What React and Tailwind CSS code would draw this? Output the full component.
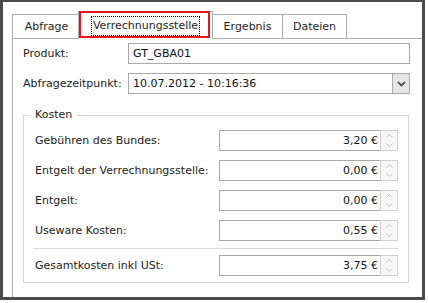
import React from "react";

const Tab = ({ label, className }) => (
    <div className={`h-[24px] bg-white border border-b-0 border-[#adadad] flex items-center justify-center text-[#1e1e1e] ${className}`}>
        {label}
    </div>
);

const Spin = () => (
    <div className="w-[18px] h-full -ml-px border border-[#d0d0d0] bg-[#f7f7f7] flex flex-col">
        <div className="flex-1 flex items-center justify-center">
            <svg width="7" height="4" viewBox="0 0 7 4">
                <path d="M0.5 3.5L3.5 0.5L6.5 3.5" stroke="#c2c2c2" strokeWidth="1" fill="none" />
            </svg>
        </div>
        <div className="flex-1 flex items-center justify-center">
            <svg width="7" height="4" viewBox="0 0 7 4">
                <path d="M0.5 0.5L3.5 3.5L6.5 0.5" stroke="#c2c2c2" strokeWidth="1" fill="none" />
            </svg>
        </div>
    </div>
);

const MoneyRow = ({ label, value, className = "" }) => (
    <div className={`flex items-center h-[21px] ${className}`}>
        <div className="w-[184px] text-[#222]">{label}</div>
        <div className="flex w-[179px] h-full">
            <div className="flex-1 h-full border border-[#a9a9a9] bg-white flex items-center justify-end pr-[2px] text-[#111]">
                {value}
            </div>
            <Spin />
        </div>
    </div>
);

export default function App() {
    return (
        <div className="w-[428px] h-[303px] bg-white font-['DejaVu_Sans',sans-serif] text-[11px] leading-[14px]">
            <div className="relative w-[425px] h-[300px] overflow-hidden bg-white border-l-[3px] border-t-2 border-r-[3px] border-b-[3px] border-[#4b4b4b]">
                {/* tab strip */}
                <div className="flex items-end h-[27px] mt-[9px] pl-[9px]">
                    <Tab label="Abfrage" className="w-[69px]" />
                    <div className="relative z-10 -ml-[3px] -mb-px w-[135px] h-[28px] bg-white border border-b-0 border-[#adadad] flex items-center justify-center">
                        <span className="px-px py-[2px] border border-dotted border-black text-[#1e1e1e]">Verrechnungsstelle</span>
                    </div>
                    <Tab label="Ergebnis" className="-ml-px w-[71px]" />
                    <Tab label="Dateien" className="-ml-px w-[65px]" />
                </div>

                {/* pane */}
                <div className="ml-[9px] w-[420px] h-[270px] border border-[#adadad] px-[10px] pt-[4px]">
                    <div className="flex items-center h-[21px]">
                        <div className="w-[105px] text-[#222]">Produkt:</div>
                        <div className="w-[282px] h-full border border-[#a9a9a9] pl-[4px] flex items-center text-[#111]">GT_GBA01</div>
                    </div>
                    <div className="flex items-center h-[21px] mt-[9px]">
                        <div className="w-[105px] text-[#222]">Abfragezeitpunkt:</div>
                        <div className="w-[282px] h-full border border-[#a9a9a9] flex items-center text-[#111]">
                            <div className="flex-1 pl-[4px]">10.07.2012 - 10:16:36</div>
                            <div className="w-[17px] h-full border-l border-[#acacac] bg-[#e6e6e6] flex items-center justify-center">
                                <svg width="9" height="6" viewBox="0 0 9 6">
                                    <path d="M1 1l3.5 3.5L8 1" stroke="#555" strokeWidth="1.8" fill="none" />
                                </svg>
                            </div>
                        </div>
                    </div>

                    <fieldset className="mt-[14px] w-[386px] h-[175px] border border-[#d6d6d6]">
                        <legend className="ml-[6px] px-[5px] leading-[14px] text-[#222]">Kosten</legend>
                        <div className="pl-[11px] pt-[8px]">
                            <MoneyRow label="Gebühren des Bundes:" value="3,20 €" />
                            <MoneyRow label="Entgelt der Verrechnungsstelle:" value="0,00 €" className="mt-[9px]" />
                            <MoneyRow label="Entgelt:" value="0,00 €" className="mt-[9px]" />
                            <MoneyRow label="Useware Kosten:" value="0,55 €" className="mt-[9px]" />
                            <div className="-ml-[2px] w-[365px] h-px bg-[#d8d8d8] mt-[7px] mb-[6px]" />
                            <MoneyRow label="Gesamtkosten inkl USt:" value="3,75 €" />
                        </div>
                    </fieldset>
                </div>

                {/* highlight around the active tab */}
                <div className="absolute z-20 left-[76px] top-[9px] w-[131px] h-[27px] border-2 border-[#e8141c] pointer-events-none" />
            </div>
        </div>
    );
}
